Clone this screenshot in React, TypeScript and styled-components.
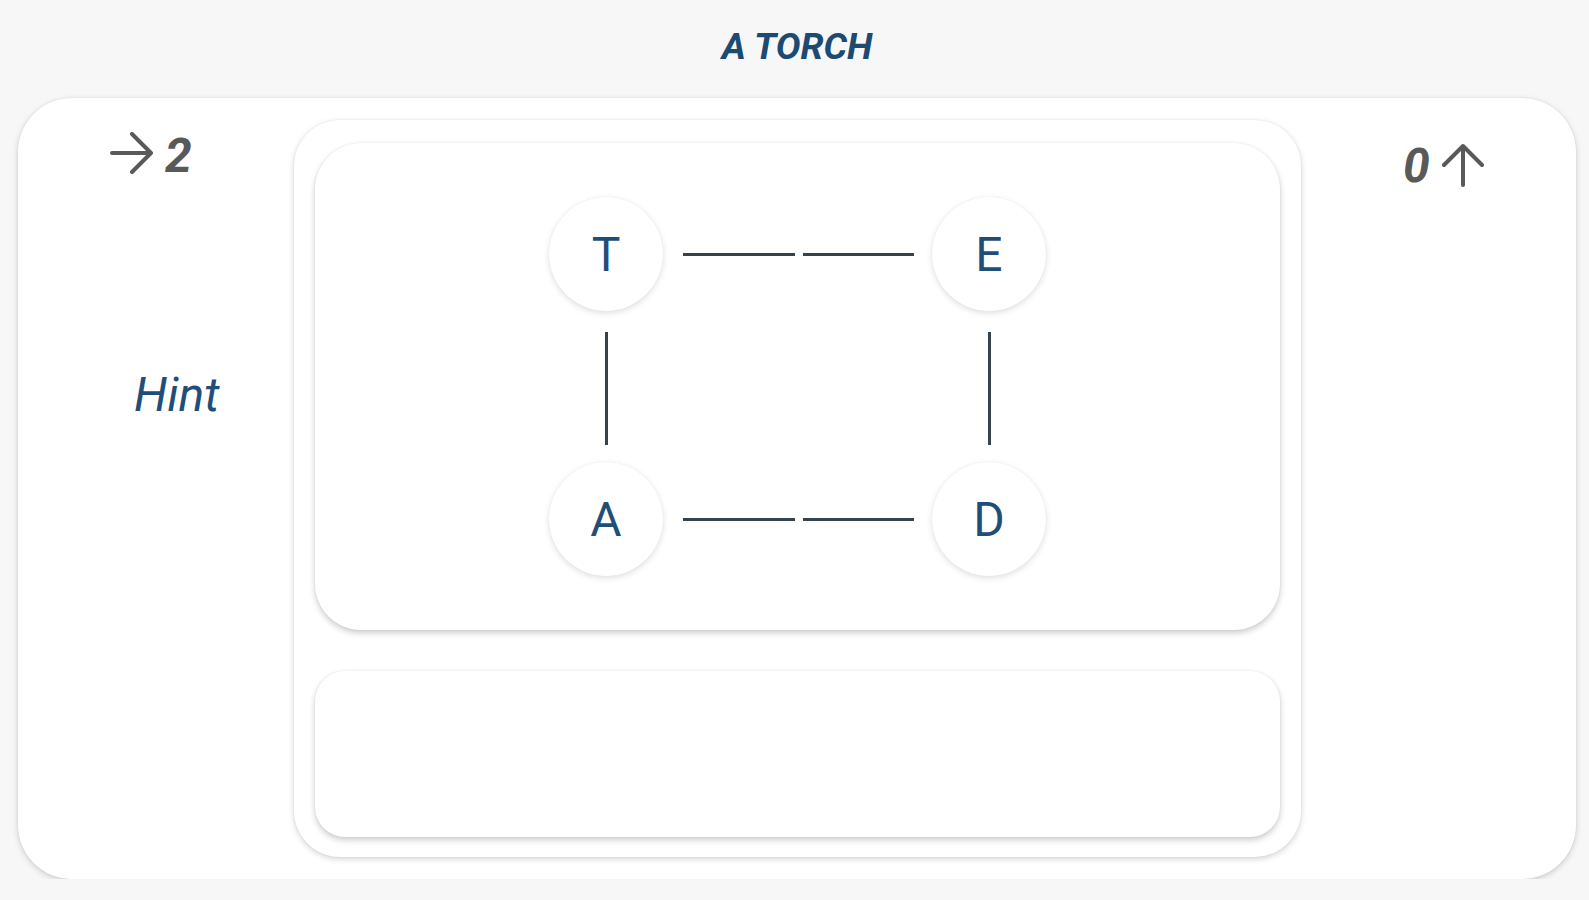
import React from 'react';
import styled, { createGlobalStyle } from 'styled-components';

const GlobalStyle = createGlobalStyle`
	body {
		margin: 0;
		background: #f7f7f7;
		font-family: Roboto, "Liberation Sans", sans-serif;
	}
`

const Page = styled.div`
	margin: 0 13px 0 18px;
	padding-top: 28px;
`

const Title = styled.div`
	text-align: center;
	font-size: 37px;
	line-height: 37px;
	font-weight: 700;
	font-style: italic;
	color: #1b4a72;
	margin-bottom: 33px;
`

const Board = styled.div`
	display: grid;
	grid-template-columns: 276px 1fr 275px;
	padding: 22px 0;
	background: #ffffff;
	border-radius: 54px;
	box-shadow: 0 2px 6px rgba(0, 0, 0, 0.17), 0 0 2px rgba(0, 0, 0, 0.08);
`

const Side = styled.div<{ $pad: number; $top: number }>`
	display: flex;
	flex-direction: column;
	align-items: flex-start;
	padding-left: ${(p) => p.$pad}px;
	padding-top: ${(p) => p.$top}px;
`

const Counter = styled.div`
	display: flex;
	align-items: center;
	gap: 11px;
	font-size: 48px;
	line-height: 48px;
	font-weight: 700;
	font-style: italic;
	color: #595959;
`

const Hint = styled.div`
	margin-top: 191px;
	margin-left: 24px;
	font-size: 48px;
	line-height: 48px;
	font-style: italic;
	color: #1f4e79;
`

const Middle = styled.div`
	display: flex;
	flex-direction: column;
	gap: 41px;
	padding: 23px 21px 20px;
	border-radius: 46px;
	background: #ffffff;
	box-shadow: 0 2px 6px rgba(0, 0, 0, 0.17), 0 0 2px rgba(0, 0, 0, 0.08);
`

const Panel = styled.div<{ $height: number; $radius: number }>`
	display: flex;
	align-items: center;
	justify-content: center;
	height: ${(p) => p.$height}px;
	border-radius: ${(p) => p.$radius}px;
	background: #ffffff;
	box-shadow: 0 3px 6px rgba(0, 0, 0, 0.2), 0 0 2px rgba(0, 0, 0, 0.08);
`

const Grid = styled.div`
	display: grid;
	grid-template-columns: 114px 269px 114px;
	grid-template-rows: 114px 151px 114px;
`

const Node = styled.div`
	display: flex;
	align-items: center;
	justify-content: center;
	width: 114px;
	height: 114px;
	border-radius: 50%;
	background: #ffffff;
	box-shadow: 0 2px 6px rgba(0, 0, 0, 0.13), 0 0 1px rgba(0, 0, 0, 0.08);
	font-size: 48px;
	color: #1f4e79;
`

const HEdge = styled.div`
	display: flex;
	align-items: center;
	gap: 8px;
	padding: 0 18px 0 20px;
`

const HSegment = styled.div`
	flex: 1;
	height: 3px;
	background: #36434f;
`

const VEdge = styled.div`
	display: flex;
	justify-content: center;
	padding: 21px 0 17px;
`

const VSegment = styled.div`
	width: 3px;
	background: #36434f;
`

const ArrowRight = () => (
	<svg width="44" height="42" viewBox="0 0 44 42" fill="none" stroke="#595959" strokeWidth="4" strokeLinecap="round" strokeLinejoin="round" style={{ marginTop: -6 }}>
		<path d="M2 21 H41 M22 2 L41 21 L22 40" />
	</svg>
)

const ArrowUp = () => (
	<svg width="42" height="44" viewBox="0 0 42 44" fill="none" stroke="#595959" strokeWidth="4" strokeLinecap="round" strokeLinejoin="round" style={{ marginTop: -2, marginLeft: 1 }}>
		<path d="M21 42 V3 M2 22 L21 3 L40 22" />
	</svg>
)

const App = () => {
	return <>
		<GlobalStyle />
		<Page>
			<Title>A TORCH</Title>
			<Board>
				<Side $pad={92} $top={12}>
					<Counter>
						<ArrowRight />
						<span>2</span>
					</Counter>
					<Hint>Hint</Hint>
				</Side>
				<Middle>
					<Panel $height={487} $radius={46}>
						<Grid>
							<Node>T</Node>
							<HEdge><HSegment /><HSegment /></HEdge>
							<Node>E</Node>
							<VEdge><VSegment /></VEdge>
							<div />
							<VEdge><VSegment /></VEdge>
							<Node>A</Node>
							<HEdge><HSegment /><HSegment /></HEdge>
							<Node>D</Node>
						</Grid>
					</Panel>
					<Panel $height={166} $radius={30} />
				</Middle>
				<Side $pad={102} $top={22}>
					<Counter>
						<span>0</span>
						<ArrowUp />
					</Counter>
				</Side>
			</Board>
		</Page>
	</>;
};

export default App;
